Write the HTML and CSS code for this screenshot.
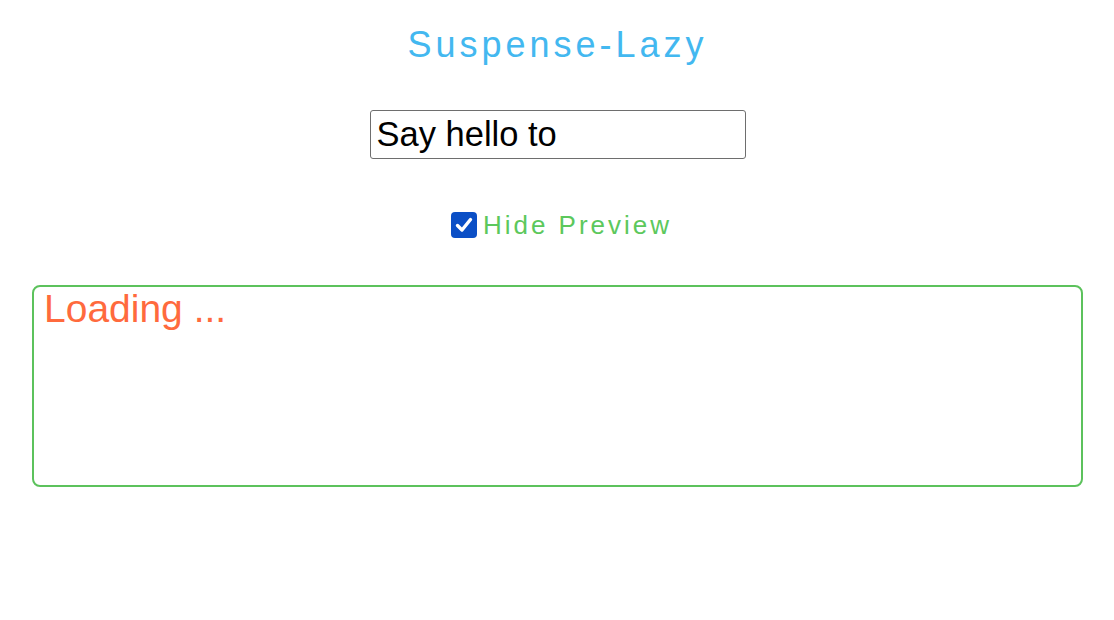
FILE: index.html
```html
<!DOCTYPE html>
<html lang="en">
<head>
<meta charset="utf-8">
<title>Suspense-Lazy</title>
<link rel="stylesheet" href="styles.css">
</head>
<body>
<main class="app">
  <h1 class="title">Suspense-Lazy</h1>
  <input class="name-input" type="text" value="Say hello to">
  <label class="toggle">
    <input class="toggle-input" type="checkbox" checked>
    <span class="toggle-box" aria-hidden="true">
      <svg viewBox="0 0 26 26" width="26" height="26">
        <rect x="0" y="0" width="26" height="26" rx="4" fill="#0b4fc6"/>
        <path d="M6.5 13.5 L11 18 L19.5 7.5" fill="none" stroke="#fff" stroke-width="3.4" stroke-linecap="round" stroke-linejoin="round"/>
      </svg>
    </span>
    <span class="toggle-text">Hide Preview</span>
  </label>
  <section class="preview">
    <p class="loading">Loading ...</p>
  </section>
</main>
</body>
</html>
```
FILE: styles.css
```css
html, body {
  margin: 0;
  padding: 0;
  background: #fff;
}

body {
  font-family: "Liberation Sans", Arial, sans-serif;
}

.app {
  display: flex;
  flex-direction: column;
  align-items: center;
  padding: 0 31px 0 32px;
}

.title {
  margin: 24px 0 0;
  font-size: 36px;
  line-height: 42px;
  font-weight: normal;
  letter-spacing: 4px;
  color: #43b8f0;
}

.name-input {
  margin-top: 44px;
  box-sizing: border-box;
  width: 376px;
  height: 49px;
  padding: 0 6px;
  border: 1px solid #6e6e6e;
  border-radius: 3px;
  font-family: "Liberation Sans", Arial, sans-serif;
  font-size: 34.5px;
  color: #000;
  background: #fff;
}

.toggle {
  margin-top: 52px;
  margin-left: 8px;
  display: flex;
  align-items: center;
  gap: 6px;
  height: 28px;
}

.toggle-input {
  position: absolute;
  opacity: 0;
  width: 0;
  height: 0;
  margin: 0;
}

.toggle-box {
  display: block;
  width: 26px;
  height: 26px;
}

.toggle-box svg {
  display: block;
}

.toggle-text {
  font-size: 26px;
  letter-spacing: 3px;
  color: #5cc85c;
}

.preview {
  align-self: stretch;
  margin-top: 46px;
  box-sizing: border-box;
  height: 202px;
  border: 2px solid #5cc25c;
  border-radius: 8px;
  padding: 0 10px;
}

.loading {
  margin: 0;
  font-size: 39px;
  line-height: 44px;
  color: #ff6a3d;
}
```
